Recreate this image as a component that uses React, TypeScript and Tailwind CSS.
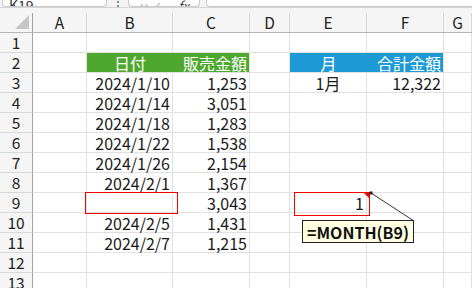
import React from 'react'

const cols = ['A', 'B', 'C', 'D', 'E', 'F', 'G']
const gridCols = 'grid grid-cols-[33px_54px_86px_77px_40px_77px_77px_1fr]'

type Cell = { text?: string; align?: 'left' | 'center' | 'right'; fill?: string }

const rows: Record<number, Record<string, Cell>> = {
  2: {
    B: { text: '日付', align: 'center', fill: 'green' },
    C: { text: '販売金額', align: 'right', fill: 'green' },
    E: { text: '月', align: 'center', fill: 'blue' },
    F: { text: '合計金額', align: 'right', fill: 'blue' },
  },
  3: { B: { text: '2024/1/10' }, C: { text: '1,253' }, E: { text: '1月', align: 'center' }, F: { text: '12,322' } },
  4: { B: { text: '2024/1/14' }, C: { text: '3,051' } },
  5: { B: { text: '2024/1/18' }, C: { text: '1,283' } },
  6: { B: { text: '2024/1/22' }, C: { text: '1,538' } },
  7: { B: { text: '2024/1/26' }, C: { text: '2,154' } },
  8: { B: { text: '2024/2/1' }, C: { text: '1,367' } },
  9: { C: { text: '3,043' }, E: { text: '1' } },
  10: { B: { text: '2024/2/5' }, C: { text: '1,431' } },
  11: { B: { text: '2024/2/7' }, C: { text: '1,215' } },
}

function TopBar() {
  return (
    <div className="h-[8px] flex items-end bg-[#f3f3f3] border-b border-[#d4d4d4] overflow-hidden">
      <div className="w-[105px] h-[8px] ml-[2px] flex items-end rounded-b-[4px] border border-t-0 border-[#c9c9c9] bg-white overflow-hidden">
        <span className="ml-[6px] -mb-[7px] text-[14px] leading-[16px] text-[#333]">K19</span>
      </div>
      <div className="w-[21px] h-[8px] flex items-end justify-center overflow-hidden">
        <span className="-mb-[4px] text-[12px] leading-[12px] text-[#555]">⋮</span>
      </div>
      <div className="w-[72px] h-[8px] flex items-end justify-between px-[10px] rounded-b-[4px] border border-t-0 border-[#c9c9c9] bg-white overflow-hidden">
        <span className="-mb-[8px] text-[12px] leading-[14px] text-[#aaa]">✕ ✓</span>
        <span className="-mb-[7px] text-[13px] leading-[14px] italic text-[#444]">fx</span>
      </div>
      <div className="flex-1 h-[8px] ml-[6px] rounded-bl-[4px] border border-t-0 border-r-0 border-[#c9c9c9] bg-white" />
    </div>
  )
}

function HeaderRow() {
  return (
    <div className={`${gridCols} h-[25px] bg-[#f5f5f5] border-b border-[#b5b5b5]`}>
      <div className="relative border-r border-[#a3a3a3] mt-[5px]">
        <svg className="absolute right-[3px] bottom-[3px]" width="14" height="14" viewBox="0 0 14 14">
          <polygon points="14,0 14,14 0,14" fill="#c6c6c6" />
        </svg>
      </div>
      {cols.map((c) => (
        <div key={c} className="flex items-end">
          <div className="flex-1 h-[19px] flex items-center justify-center border-r border-[#d8d8d8] text-[15.5px] leading-none text-[#222]">
            {c}
          </div>
        </div>
      ))}
    </div>
  )
}

function Row({ n }: { n: number }) {
  const data = rows[n] || {}
  return (
    <div className={`${gridCols} h-[20px]`}>
      <div className="flex items-center justify-center bg-[#f5f5f5] border-r border-b border-r-[#a3a3a3] border-b-[#d8d8d8] text-[15.5px] leading-none text-[#222]">
        {n}
      </div>
      {cols.map((c, i) => {
        const cell = data[c]
        const fill =
          cell?.fill === 'green' ? 'bg-[#4ea72e] text-white' : cell?.fill === 'blue' ? 'bg-[#1d9ad6] text-white' : 'text-[#1a1a1a]'
        const next = cols[i + 1]
        const sameFill = cell?.fill && next && data[next]?.fill === cell.fill
        const align =
          cell?.align === 'center' ? 'justify-center' : cell?.align === 'left' ? 'justify-start pl-[3px]' : 'justify-end pr-[2px]'
        return (
          <div
            key={c}
            className={`flex items-center ${align} ${fill} border-b border-[#e1e1e1] ${sameFill ? '' : 'border-r border-r-[#e1e1e1]'} text-[16px] leading-none whitespace-nowrap`}
          >
            {cell?.text}
          </div>
        )
      })}
    </div>
  )
}

export default function App() {
  return (
    <div
      className="relative w-[472px] h-[288px] overflow-hidden bg-white"
      style={{ fontFamily: '"Noto Sans CJK JP", "Noto Sans", sans-serif' }}
    >
      <TopBar />
      <HeaderRow />
      {Array.from({ length: 13 }, (_, i) => (
        <Row key={i} n={i + 1} />
      ))}

      {/* annotation overlays */}
      <div className="absolute left-[85px] top-[192px] w-[93px] h-[22px] border-[1.5px] border-[#f00000]" />
      <div className="absolute left-[294px] top-[192px] w-[76px] h-[24px] border-[1.5px] border-[#f00000]" />
      <svg className="absolute left-0 top-0" width="472" height="288" viewBox="0 0 472 288">
        <polygon points="364,193 369,193 369,198" fill="#f00000" />
        <line x1="371" y1="193" x2="414" y2="221" stroke="#333" strokeWidth="1" />
        <rect x="369.5" y="191.5" width="3" height="3" fill="#222" />
      </svg>
      <div className="absolute left-[302px] top-[220px] w-[112px] h-[23px] flex items-center pl-[4px] bg-[#ffffe1] border border-[#222] text-[16px] font-bold text-[#111] leading-none">
        =MONTH(B9)
      </div>
    </div>
  )
}
